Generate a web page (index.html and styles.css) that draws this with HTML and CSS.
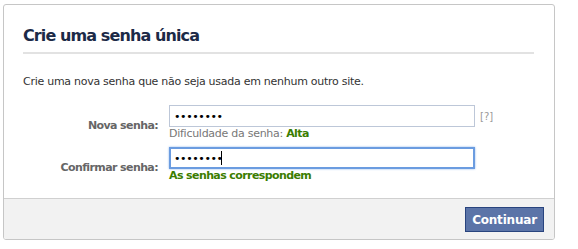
FILE: index.html
```html
<!DOCTYPE html>
<html lang="pt-BR">
<head>
<meta charset="utf-8">
<title>Crie uma senha única</title>
<link rel="stylesheet" href="styles.css">
</head>
<body>
<div class="card">
  <div class="content">
    <h2 class="title">Crie uma senha única</h2>
    <p class="intro">Crie uma nova senha que não seja usada em nenhum outro site.</p>
    <div class="form">
      <label class="label" for="p1">Nova senha:</label>
      <div class="field">
        <div class="input-row">
          <input id="p1" class="input" type="password" value="abcdefgh">
          <span class="help">[?]</span>
        </div>
        <div class="note">Dificuldade da senha: <b class="ok">Alta</b></div>
      </div>
      <label class="label" for="p2">Confirmar senha:</label>
      <div class="field">
        <div class="input-row">
          <div class="input-wrap">
            <input id="p2" class="input focused" type="password" value="abcdefgh">
            <span class="caret"></span>
          </div>
        </div>
        <div class="note ok">As senhas correspondem</div>
      </div>
    </div>
  </div>
  <div class="footer">
    <button class="btn" type="button">Continuar</button>
  </div>
</div>
</body>
</html>
```
FILE: styles.css
```css
html, body {
  margin: 0;
  padding: 0;
  background: #fff;
}
body {
  font-family: "DejaVu Sans", "Liberation Sans", sans-serif;
  font-size: 11px;
  letter-spacing: -0.27px;
  color: #333;
}
.card {
  margin: 4px 0 0 3px;
  width: 550px;
  border: 1px solid #c6c6c6;
  border-radius: 3px;
  overflow: hidden;
  background: #fff;
}
.content {
  padding: 21px 20px 15px 19px;
}
.title {
  margin: 0;
  font-size: 16px;
  line-height: 20px;
  font-weight: bold;
  letter-spacing: -0.9px;
  color: #1c2a47;
  padding: 0 0 6px 0;
  border-bottom: 2px solid #e2e2e2;
}
.intro {
  margin: 21px 0 0 0;
  line-height: 14px;
  color: #333;
}
.form {
  margin-top: 16px;
  display: grid;
  grid-template-columns: 135px 1fr;
  column-gap: 11px;
  row-gap: 6px;
  align-items: center;
}
.label {
  text-align: right;
  font-weight: bold;
  letter-spacing: -0.6px;
  color: #666;
  line-height: 14px;
  padding-top: 5px;
}
.field {
  display: flex;
  flex-direction: column;
}
.input-row {
  display: flex;
  align-items: center;
  gap: 5px;
}
.input-wrap {
  position: relative;
  display: flex;
}
.input {
  box-sizing: border-box;
  width: 306px;
  height: 22px;
  margin: 0;
  padding: 0 4px;
  border: 1px solid #bdc7d8;
  font-family: "DejaVu Sans", sans-serif;
  font-size: 11px;
  color: #000;
  outline: none;
  letter-spacing: -0.4px;
}
.input.focused {
  border: 2px solid #6b9ce0;
  box-shadow: 0 0 2px #8fb6ec;
  padding: 0 3px;
}
.caret {
  position: absolute;
  left: 52px;
  top: 4px;
  width: 1px;
  height: 14px;
  background: #000;
}
.help {
  color: #999;
  font-size: 10px;
  letter-spacing: 0;
}
.note {
  line-height: 14px;
  color: #777;
}
.ok {
  color: #3b7d00;
  font-weight: bold;
  letter-spacing: -0.6px;
}
.footer {
  border-top: 1px solid #d0d0d0;
  background: #f2f2f2;
  display: flex;
  justify-content: flex-end;
  padding: 8px 10px 7px 0;
}
.btn {
  box-sizing: border-box;
  width: 79px;
  height: 25px;
  margin: 0;
  padding: 0;
  background: #5b74a8;
  border: 1px solid #29447e;
  color: #fff;
  font-family: "DejaVu Sans", sans-serif;
  font-size: 12px;
  font-weight: bold;
  letter-spacing: -0.2px;
  cursor: pointer;
}
```
